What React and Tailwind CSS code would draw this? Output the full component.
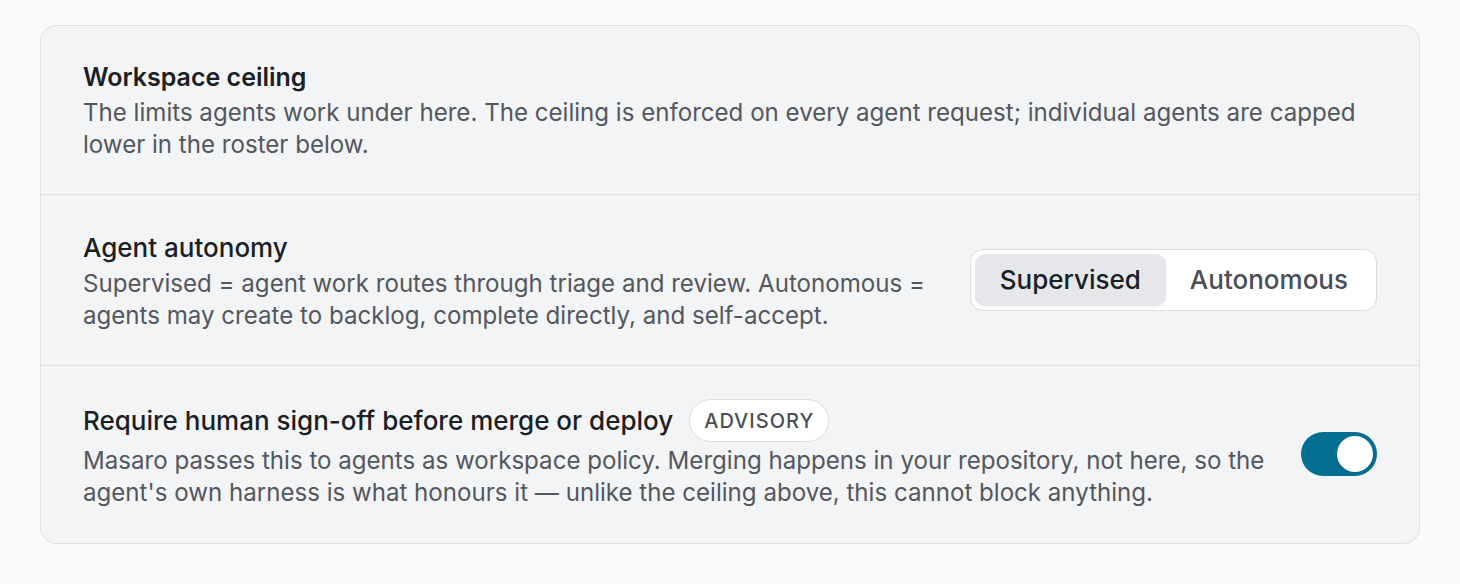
export default function App() {
  return (
    <div className="min-h-screen bg-[#f9fafb] px-10 pt-[25px] pb-10" style={{ fontFamily: "Inter, 'Noto Sans', sans-serif" }}>
      <div className="rounded-[16px] border border-[#dfe0e3] bg-[#f3f4f6]">
        {/* Ceiling intro */}
        <section className="border-b border-[#dfe0e3] px-[42px] pt-[36px] pb-[33px]">
          <h2 className="text-[25px] font-semibold leading-[30px] text-[#1b1f24]">Workspace ceiling</h2>
          <p className="mt-[5px] text-[24.1px] leading-[32px] text-[#53575e]">
            The limits agents work under here. The ceiling is enforced on every agent request; individual agents are capped lower in the roster below.
          </p>
        </section>

        {/* Autonomy mode */}
        <section className="flex items-center gap-8 border-b border-[#dfe0e3] px-[42px] pt-[38px] pb-[33px]">
          <div className="flex-1">
            <h3 className="text-[26px] font-medium leading-[30px] text-[#1b1f24]">Agent autonomy</h3>
            <p className="mt-[5px] text-[24.1px] leading-[32px] text-[#53575e]">
              Supervised = agent work routes through triage and review. Autonomous = agents may create to backlog, complete directly, and self-accept.
            </p>
          </div>
          <div className="mb-[6px] flex shrink-0 items-center rounded-[13px] border border-[#dcdde0] bg-white p-[4px]">
            <button className="h-[52px] rounded-[10px] bg-[#e5e7ea] px-[25px] text-[26px] font-medium text-[#1b1f24] shadow-[0_1px_2px_rgba(0,0,0,0.06)]">
              Supervised
            </button>
            <button className="h-[52px] rounded-[10px] pl-[24px] pr-[24px] text-[26px] font-medium text-[#4a4e55]">
              Autonomous
            </button>
          </div>
        </section>

        {/* Human sign-off */}
        <section className="flex items-center gap-8 px-[42px] pt-[33px] pb-[34px]">
          <div className="flex-1">
            <div className="flex items-center gap-4">
              <h3 className="text-[26px] font-medium leading-[30px] text-[#1b1f24]">Require human sign-off before merge or deploy</h3>
              <span className="flex h-[43px] items-center rounded-full border border-[#dcdde0] bg-white px-[14px] text-[20px] font-medium tracking-[0.05em] text-[#4a4e55]">
                ADVISORY
              </span>
            </div>
            <p className="mt-[3px] text-[24.1px] leading-[32px] text-[#53575e]">
              Masaro passes this to agents as workspace policy. Merging happens in your repository, not here, so the agent's own harness is what honours it — unlike the ceiling above, this cannot block anything.
            </p>
          </div>
          <button className="relative flex h-[44px] w-[76px] shrink-0 items-center rounded-full bg-[#046f91] px-[4px]">
            <span className="ml-auto block h-[36px] w-[36px] rounded-full bg-white shadow-[0_1px_2px_rgba(0,0,0,0.15)]" />
          </button>
        </section>
      </div>
    </div>
  );
}
